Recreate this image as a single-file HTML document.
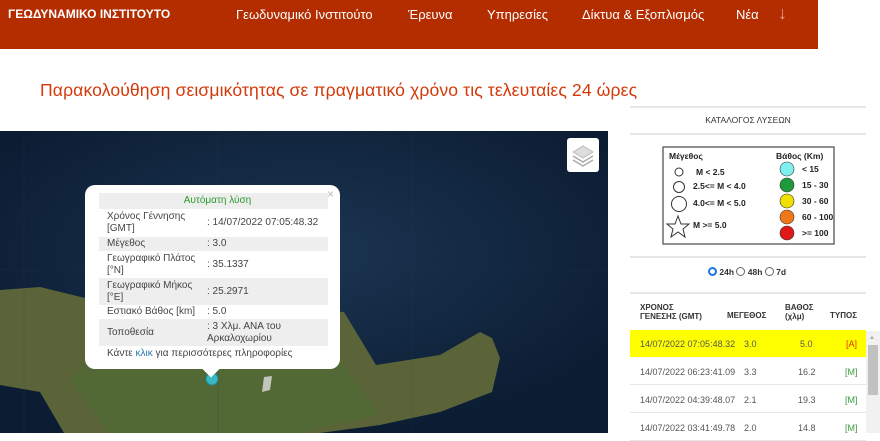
<!DOCTYPE html>
<html><head><meta charset="utf-8"><style>
*{margin:0;padding:0;box-sizing:border-box}
body{width:880px;height:433px;overflow:hidden;background:#fff;font-family:"Liberation Sans",sans-serif;position:relative}
.nav{position:absolute;left:0;top:0;width:818px;height:49px;background:#b32d00;color:#fff}
.nav span{position:absolute;top:7px;font-size:13px}
h1{position:absolute;left:40px;top:80px;font-size:17.6px;font-weight:normal;color:#d23a0a;letter-spacing:0.1px}
.map{position:absolute;left:0;top:131px;width:608px;height:302px;background:#10233a;overflow:hidden}
.pop{position:absolute;left:85px;top:185px;width:255px;height:184px;background:#fff;border-radius:10px;font-size:10px;color:#444}
.pop table{position:absolute;left:14px;top:8px;width:229px;border-collapse:collapse}
.pop td{padding:0 0 0 8px;line-height:12px;vertical-align:middle}
.pop tr.g td{background:#eee}
.ln{position:absolute;left:630px;width:236px;height:2px;background:#e4e6ea}
.tb{position:absolute;left:630px;width:236px;font-size:9px;color:#555}
.row{position:absolute;left:630px;width:236px;height:27px;border-bottom:1px solid #e6e6e6;font-size:9px;color:#555}
.row span{position:absolute;top:9px}
</style></head><body>
<div class="nav">
<span style="left:8px;font-weight:bold;font-size:12px;top:7px">ΓΕΩΔΥΝΑΜΙΚΟ ΙΝΣΤΙΤΟΥΤΟ</span>
<span style="left:236px">Γεωδυναμικό Ινστιτούτο</span>
<span style="left:408px">Έρευνα</span>
<span style="left:487px">Υπηρεσίες</span>
<span style="left:582px">Δίκτυα &amp; Εξοπλισμός</span>
<span style="left:736px">Νέα</span>
<span style="left:778px;top:3px;font-size:18px;color:#e8a080">↓</span>
</div>
<h1>Παρακολούθηση σεισμικότητας σε πραγματικό χρόνο τις τελευταίες 24 ώρες</h1>
<div class="map">
<svg width="608" height="302" viewBox="0 131 608 302" style="position:absolute;left:0;top:0">
<defs><radialGradient id="s" cx="50%" cy="40%" r="60%"><stop offset="0" stop-color="#1b3552"/><stop offset="1" stop-color="#0c1d33"/></radialGradient></defs>
<rect x="0" y="131" width="608" height="302" fill="url(#s)"/>
<polygon points="0,290 40,287 85,298 200,300 344,312 376,365 440,355 480,332 492,338 500,358 492,392 440,412 380,425 320,433 64,433 40,392 0,385" fill="#5b6438"/>
<polygon points="120,330 250,330 340,360 380,415 300,433 110,433 70,380" fill="#4f6a35" opacity=".7"/>
<polygon points="264,377 272,376 270,390 262,392" fill="#ddd" opacity=".8"/>
<line x1="24" y1="131" x2="24" y2="433" stroke="#2a3c55" stroke-width=".4" opacity=".5"/>
<line x1="218" y1="131" x2="218" y2="433" stroke="#2a3c55" stroke-width=".4" opacity=".5"/>
<line x1="412" y1="131" x2="412" y2="433" stroke="#2a3c55" stroke-width=".4" opacity=".5"/>
<line x1="0" y1="270" x2="608" y2="270" stroke="#2a3c55" stroke-width=".4" opacity=".5"/>
<circle cx="212" cy="379" r="6" fill="#3bb8c0" stroke="#1d8a92"/>
</svg>
<div style="position:absolute;left:567px;top:7px;width:32px;height:34px;background:#fff;border-radius:3px">
<svg width="32" height="34"><path d="M6 14l10-6 10 6-10 6z" fill="#ddd" stroke="#bbb"/><path d="M6 18l10 6 10-6M6 22l10 6 10-6" fill="none" stroke="#aaa" stroke-width="1.5"/></svg></div>
</div>
<div class="pop">
<span style="position:absolute;right:6px;top:2px;color:#bbb;font-size:12px">×</span>
<table>
<tr class="g"><td colspan="2" style="text-align:center;color:#2a9a2a;height:16px">Αυτόματη λύση</td></tr>
<tr><td style="height:28px;width:100px">Χρόνος Γέννησης [GMT]</td><td>: 14/07/2022 07:05:48.32</td></tr>
<tr class="g"><td style="height:14px">Μέγεθος</td><td>: 3.0</td></tr>
<tr><td style="height:27px">Γεωγραφικό Πλάτος [°N]</td><td>: 35.1337</td></tr>
<tr class="g"><td style="height:27px">Γεωγραφικό Μήκος [°E]</td><td>: 25.2971</td></tr>
<tr><td style="height:14px">Εστιακό Βάθος [km]</td><td>: 5.0</td></tr>
<tr class="g"><td style="height:27px">Τοποθεσία</td><td>: 3 Χλμ. ΑΝΑ του Αρκαλοχωρίου</td></tr>
<tr><td colspan="2" style="height:16px">Κάντε <span style="color:#2a7ab0">κλικ</span> για περισσότερες πληροφορίες</td></tr>
</table>
<div style="position:absolute;left:120px;bottom:-6px;width:12px;height:12px;background:#fff;transform:rotate(45deg)"></div>
</div>
<div class="ln" style="top:106px"></div>
<div class="tb" style="top:115px;text-align:center;font-size:8.5px;color:#333">ΚΑΤΑΛΟΓΟΣ ΛΥΣΕΩΝ</div>
<div class="ln" style="top:133px"></div>
<svg style="position:absolute;left:662px;top:146px" width="173" height="99" font-family="Liberation Sans" font-size="8.5" font-weight="bold" fill="#222">
<rect x="1" y="1" width="171" height="97" fill="#fff" stroke="#555" stroke-width="1.3"/>
<text x="7" y="13">Μέγεθος</text><text x="114" y="13">Βάθος (Km)</text>
<circle cx="17" cy="26" r="4" fill="none" stroke="#333"/><text x="34" y="29">M &lt; 2.5</text>
<circle cx="17" cy="41" r="5.5" fill="none" stroke="#333"/><text x="31" y="43">2.5&lt;= M &lt; 4.0</text>
<circle cx="17" cy="58" r="7.5" fill="none" stroke="#333"/><text x="31" y="60">4.0&lt;= M &lt; 5.0</text>
<path d="M16 70l3 8 8 0-6 5 2 8-7-5-7 5 2-8-6-5 8 0z" fill="none" stroke="#333"/><text x="31" y="82">M &gt;= 5.0</text>
<circle cx="125" cy="23" r="7" fill="#7ff0f0" stroke="#333" stroke-width=".6"/><text x="140" y="26">&lt; 15</text>
<circle cx="125" cy="39" r="7" fill="#1e9a3a" stroke="#333" stroke-width=".6"/><text x="140" y="42">15 - 30</text>
<circle cx="125" cy="55" r="7" fill="#f0e000" stroke="#333" stroke-width=".6"/><text x="140" y="58">30 - 60</text>
<circle cx="125" cy="71" r="7" fill="#f07818" stroke="#333" stroke-width=".6"/><text x="140" y="74">60 - 100</text>
<circle cx="125" cy="87" r="7" fill="#e01818" stroke="#333" stroke-width=".6"/><text x="140" y="90">&gt;= 100</text>
</svg>
<div class="ln" style="top:256px"></div>
<div class="tb" style="top:267px;left:708px;width:auto;font-size:8.5px;color:#333;font-weight:bold">
<span style="display:inline-block;width:9px;height:9px;border-radius:50%;border:2.5px solid #1a73e8;vertical-align:-1px"></span> 24h <span style="display:inline-block;width:9px;height:9px;border-radius:50%;border:1px solid #666;vertical-align:-1px"></span> 48h <span style="display:inline-block;width:9px;height:9px;border-radius:50%;border:1px solid #666;vertical-align:-1px"></span> 7d</div>
<div class="ln" style="top:292px"></div>
<div class="tb" style="top:303px;font-weight:bold;color:#333;font-size:8px">
<span style="position:absolute;left:10px">ΧΡΟΝΟΣ<br>ΓΕΝΕΣΗΣ (GMT)</span>
<span style="position:absolute;left:97px;top:8px">ΜΕΓΕΘΟΣ</span>
<span style="position:absolute;left:155px">ΒΑΘΟΣ<br>(χλμ)</span>
<span style="position:absolute;left:200px;top:8px">ΤΥΠΟΣ</span>
</div>
<div class="row" style="top:330px;background:#ffff00;border:none;height:27px"><span style="left:10px">14/07/2022 07:05:48.32</span><span style="left:114px">3.0</span><span style="left:170px">5.0</span><span style="left:216px;color:#e03000">[A]</span></div>
<div class="row" style="top:358px"><span style="left:10px">14/07/2022 06:23:41.09</span><span style="left:114px">3.3</span><span style="left:168px">16.2</span><span style="left:215px;color:#3a9a3a">[M]</span></div>
<div class="row" style="top:386px"><span style="left:10px">14/07/2022 04:39:48.07</span><span style="left:114px">2.1</span><span style="left:168px">19.3</span><span style="left:215px;color:#3a9a3a">[M]</span></div>
<div class="row" style="top:414px"><span style="left:10px">14/07/2022 03:41:49.78</span><span style="left:114px">2.0</span><span style="left:168px">14.8</span><span style="left:215px;color:#3a9a3a">[M]</span></div>
<div style="position:absolute;left:866px;top:331px;width:14px;height:102px;background:#f1f1f1"></div>
<div style="position:absolute;left:868px;top:345px;width:10px;height:50px;background:#c1c1c1"></div>
<div style="position:absolute;left:869px;top:335px;color:#aaa;font-size:6px">▲</div>
</body></html>
